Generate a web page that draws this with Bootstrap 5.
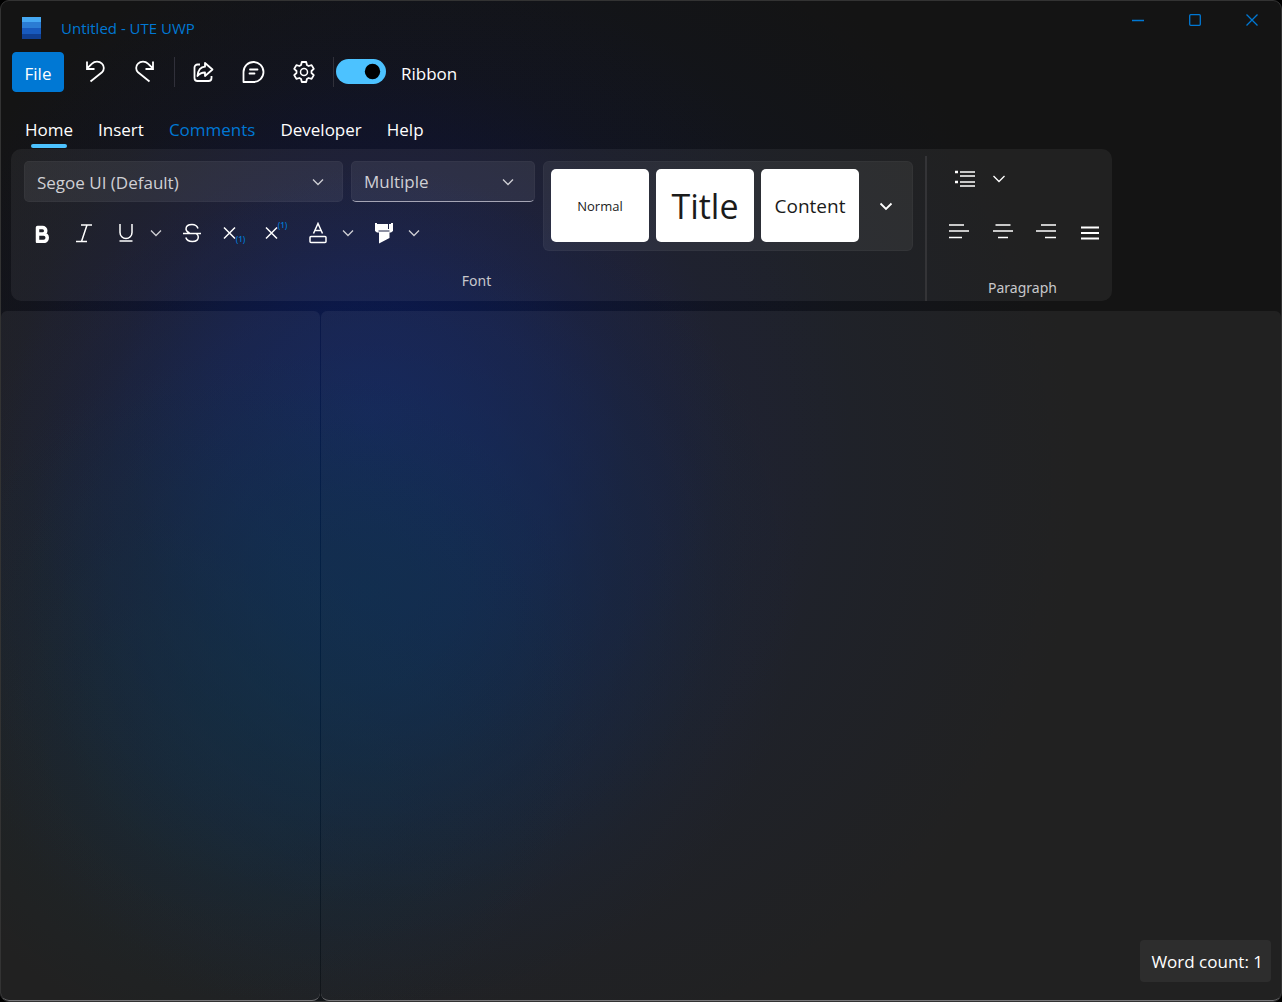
<!DOCTYPE html>
<html lang="en" data-bs-theme="dark">
<head>
<meta charset="utf-8">
<meta name="viewport" content="width=device-width, initial-scale=1">
<title>Untitled - UTE UWP</title>
<link href="https://cdn.jsdelivr.net/npm/bootstrap@5.3.0/dist/css/bootstrap.min.css" rel="stylesheet">
<style>
:root{--accent:#0078d4;--glow:#4cc2ff;--panel:rgba(255,255,255,.06)}
body{background:#000;font-family:"Open Sans","Noto Sans",sans-serif;font-size:17px;line-height:24px;color:#fff}
.app-window{min-height:100vh;border:1px solid #333;border-radius:9px;overflow:hidden;
 background:
 radial-gradient(circle at 250px 700px,rgba(4,36,54,.5) 0,rgba(4,36,54,.38) 100px,rgba(4,36,50,.18) 220px,transparent 350px),
 radial-gradient(circle at 370px 590px,rgba(2,34,76,.85) 0,rgba(2,34,76,.72) 90px,rgba(2,32,70,.36) 240px,rgba(2,30,60,.12) 350px,transparent 430px),
 radial-gradient(circle at 370px 420px,rgba(14,24,92,.95) 0,rgba(14,22,86,.75) 120px,rgba(14,18,72,.34) 260px,rgba(16,18,60,.13) 360px,transparent 480px),
 radial-gradient(circle at 480px 480px,rgba(10,24,62,.5) 0,rgba(10,24,62,.24) 320px,transparent 600px),
 #141414}
.plain-btn{background:none;border:0;padding:0;color:#fff;display:inline-flex;align-items:center;justify-content:center}
.plain-btn:hover{background:rgba(255,255,255,.08);border-radius:4px}
svg{fill:none;stroke:currentColor;stroke-width:1.5;display:block}
.title-bar{height:51px;padding-right:1px}
.app-name{font-size:15px;color:var(--accent);padding:2px 0 0 20px}
.app-logo{margin:3px 0 0 21px}
.solid-icon{stroke:none}
.win-btn{width:57px;height:38px;color:var(--accent)}
.win-btn svg{stroke-width:1.3}
.tool-row{height:40px;padding-left:11px}
.file-btn{--bs-btn-bg:var(--accent);--bs-btn-border-color:var(--accent);width:52px;height:40px;padding:3px 0 0;font-size:17px;border-radius:4px}
.tool-btn{width:50px;height:38px}
.undo-group{padding-left:6px}
.split-line{width:1px;height:30px;background:#30303a}
.ribbon-switch{padding:1px 0 0;min-height:0}
.ribbon-switch .form-check-input{float:none;width:50px;height:25px;margin:0 15px 0 2px;background-color:var(--glow);border:0;
 background-image:url("data:image/svg+xml,%3Csvg xmlns='http://www.w3.org/2000/svg' viewBox='0 0 25 25'%3E%3Ccircle cx='11.5' cy='12.5' r='7.7' fill='%23000'/%3E%3C/svg%3E")!important}
.tab-row{gap:25px;padding:26px 0 0 24px;height:57px}
.tab-row .nav-link{padding:0;color:#fff;height:30px;position:relative}
.tab-row .tab-accent{color:var(--accent)}
.tab-row .active::after{content:"";position:absolute;left:6px;right:6px;bottom:0;height:4px;border-radius:2px;background:var(--glow)}
.ribbon{margin-left:10px;height:152px;border-radius:10px;background:var(--panel);width:fit-content;max-width:100%}
.font-group{padding:12px 12px 0 13px;width:914px}
.font-left{width:511px}
.picker{height:41px;padding:2px 12px 0;font-size:17px;color:#cfcfd4;background-color:rgba(255,255,255,.07);border:1px solid rgba(255,255,255,.03);border-radius:5px;
 background-image:url("data:image/svg+xml,%3Csvg xmlns='http://www.w3.org/2000/svg' viewBox='0 0 12 12'%3E%3Cpath d='M1 3.5l5 5 5-5' fill='none' stroke='%23cfcfd4' stroke-width='1.3'/%3E%3C/svg%3E");background-size:12px;background-position:right 18px center}
.picker-font{width:319px}
.picker-size{width:184px;padding-top:0;border-bottom-color:#a5a5b5;background-position:right 20px center}
.format-row{margin:11px 0 0 -3px;height:40px}
.fmt-btn{width:42px;height:40px}
.drop-btn{width:18px;height:40px;color:#cfcfd4}
.drop-btn + .fmt-btn{margin-left:6px}
.drop-btn svg,.list-drop svg{stroke-width:1.3}
.script-mark{font-size:8px;line-height:10px;font-weight:600;color:var(--accent)}
.sub-mark{padding-top:12px}
.sup-mark{padding-bottom:16px}
.gallery{width:370px;height:90px;padding:7px 0 7px 7px;border-radius:6px;background:rgba(255,255,255,.06);border:1px solid rgba(255,255,255,.03)}
.gallery-tiles{gap:7px}
.style-tile{width:98px;height:73px;background:#fff;color:#1b1b1b;border:0;border-radius:5px;padding:0}
.tile-normal{font-size:13px}.tile-title{font-size:34px}.tile-content{font-size:19px}
.group-name{font-family:"Noto Sans",sans-serif;font-size:14px;line-height:20px;color:#c8c8cc}
.font-name{padding-left:16px;margin-top:18px}
.group-line{width:2px;background:#343437;margin-top:7px}
.para-group{width:185px;padding-top:10px}
.list-row{height:39px;padding-left:17px}
.list-btn{width:42px;height:39px}.list-drop{width:25px;height:39px}
.align-row{padding-left:10px;margin-top:14px}
.align-btn{width:45px;height:38px}
.para-name{margin-top:28px;padding-left:6px}
.page-panes{gap:1px;margin-top:10px}
.pane{background:var(--panel);border-radius:6px 6px 8px 8px;border-bottom:1px solid #77777a}
.side-pane{width:calc(25% - 1px)}
.word-count{background:#2d2d2d;border-radius:4px;padding:10px 8px 8px 11px;margin:0 10px 18px 0}
</style>
<script src="https://cdn.jsdelivr.net/npm/bootstrap@5.3.0/dist/js/bootstrap.bundle.min.js"></script>
</head>
<body>
<div class="app-window d-flex flex-column">
 <header>
  <div class="title-bar d-flex align-items-start">
   <div class="d-flex align-items-center flex-grow-1 h-100">
    <svg class="app-logo solid-icon" width="19" height="22" aria-hidden="true"><path fill="#45a8f2" d="M0 0h19v6H0z"/><path fill="#2b7cd3" d="M0 5h19v6H0z"/><path fill="#185abd" d="M0 11h19v6H0z"/><path fill="#103f91" d="M0 17h19v5H0z"/></svg>
    <span class="app-name">Untitled - UTE UWP</span>
   </div>
   <button class="plain-btn win-btn" aria-label="Minimize"><svg width="12" height="12"><path d="M0 6.5h12"/></svg></button>
   <button class="plain-btn win-btn" aria-label="Maximize"><svg width="12" height="12"><rect x=".7" y=".7" width="10.6" height="10.6" rx="1"/></svg></button>
   <button class="plain-btn win-btn" aria-label="Close"><svg width="12" height="12"><path d="M.5.5l11 11M11.500.5l-11 11"/></svg></button>
  </div>
  <div class="tool-row d-flex align-items-center">
   <button class="btn btn-primary file-btn">File</button>
   <div class="undo-group d-flex align-items-center">
    <button class="plain-btn tool-btn" aria-label="Undo"><svg width="22" height="24"><path style="stroke-width:1.8px" d="M3 1.500v7.500h7.500M3 8.500L8 3.700a7 7 0 0 1 10 0a6 6 0 0 1 0 8.600L6.500 21.500"/></svg></button>
    <button class="plain-btn tool-btn" aria-label="Redo"><svg width="22" height="24"><path style="stroke-width:1.8px" d="M19 1.500v7.500h-7.500M19 8.500L14 3.700a7 7 0 0 0-10 0a6 6 0 0 0 0 8.600L15.500 21.500"/></svg></button>
   </div>
   <div class="split-line ms-1"></div>
   <button class="plain-btn tool-btn ms-1" aria-label="Share"><svg width="22" height="22"><path style="stroke-width:1.8px" d="M7 3.500H4.500a3 3 0 0 0-3 3V17a3 3 0 0 0 3 3h11a3 3 0 0 0 3-3v-2"/><path style="stroke-width:1.8px" stroke-linejoin="round" d="M12 2l7.500 6.500L12 15v-3.500c-3 0-5.500 1-7.500 3.500c.5-5.500 3.500-9 7.500-9.300z"/></svg></button>
   <button class="plain-btn tool-btn" aria-label="Comment"><svg width="24" height="24" stroke-linecap="round"><path style="stroke-width:1.8px" stroke-linejoin="round" d="M1.500 22V12A10 10 0 1 1 11.500 22z"/><path style="stroke-width:1.8px" d="M8 9.500h7.500M7.500 13.500h5"/></svg></button>
   <button class="plain-btn tool-btn" aria-label="Settings"><svg width="24" height="24" viewBox="0 0 24 24"><circle cx="12" cy="12" r="3.500"/><path style="stroke-width:1.8px" stroke-linejoin="round" d="M9.800 2h4.400l.7 3 1.700 1 3-.9 2.200 3.800-2.300 2.100v2l2.300 2.100-2.200 3.800-3-.9-1.700 1-.7 3H9.800l-.7-3-1.700-1-3 .9-2.200-3.800L4.500 13v-2L2.200 8.900l2.200-3.800 3 .9 1.700-1z"/></svg></button>
   <div class="split-line ms-1"></div>
   <div class="form-check form-switch ribbon-switch d-flex align-items-center">
    <input class="form-check-input" type="checkbox" role="switch" id="ribbonToggle" checked>
    <label for="ribbonToggle" class="pt-1">Ribbon</label>
   </div>
  </div>
  <nav class="nav tab-row" aria-label="Ribbon tabs">
   <a class="nav-link active" aria-current="page" href="#">Home</a>
   <a class="nav-link" href="#">Insert</a>
   <a class="nav-link tab-accent" href="#">Comments</a>
   <a class="nav-link" href="#">Developer</a>
   <a class="nav-link" href="#">Help</a>
  </nav>
 </header>
 <section class="ribbon d-flex" aria-label="Home">
  <div class="font-group">
   <div class="d-flex gap-2">
    <div class="font-left">
     <div class="d-flex gap-2">
      <select class="form-select picker picker-font" aria-label="Font family"><option>Segoe UI (Default)</option></select>
      <select class="form-select picker picker-size" aria-label="Font size"><option>Multiple</option></select>
     </div>
     <div class="format-row d-flex">
      <button class="plain-btn fmt-btn" aria-label="Bold"><svg width="16" height="20" stroke-linejoin="round"><path style="stroke-width:3.5px" d="M3.500 4.500h5a3 3 0 0 1 0 6.500h-5zM3.500 11h6a3.500 3.500 0 0 1 0 7.500h-6z"/></svg></button>
      <button class="plain-btn fmt-btn" aria-label="Italic"><svg width="18" height="20"><path d="M6 2h11M1 18.500h11M12 2L6.500 18.500"/></svg></button>
      <button class="plain-btn fmt-btn" aria-label="Underline"><svg width="16" height="20"><path d="M2 1v8.500a6 6 0 0 0 12 0V1M1.500 18h13"/></svg></button>
      <button class="plain-btn drop-btn" aria-label="Underline styles"><svg width="12" height="8"><path d="M1 1.500l5 5 5-5"/></svg></button>
      <button class="plain-btn fmt-btn" aria-label="Strikethrough"><svg width="20" height="20"><path d="M16 5.500C15 2.500 12.500 1.500 10 1.500c-3.500 0-6 1.500-6 4.500c0 2 1.500 3 3.500 4M1 10.500h18M14.500 11c1.200.8 1.800 1.800 1.800 3c0 3-2.800 4.500-6 4.500c-3 0-5.500-1-6.500-4"/></svg></button>
      <button class="plain-btn fmt-btn" aria-label="Subscript"><svg width="13" height="14"><path d="M1 1.500l11 11M12 1.500l-11 11"/></svg><span class="script-mark sub-mark">(1)</span></button>
      <button class="plain-btn fmt-btn" aria-label="Superscript"><svg width="13" height="14"><path d="M1 1.500l11 11M12 1.500l-11 11"/></svg><span class="script-mark sup-mark">(1)</span></button>
      <button class="plain-btn fmt-btn" aria-label="Font color"><svg width="20" height="22"><path d="M5.500 11.500L10 1.500l4.500 10M7 8.500h6"/><rect x="2" y="14.500" width="16" height="6" rx="1"/></svg></button>
      <button class="plain-btn drop-btn" aria-label="Font colors"><svg width="12" height="8"><path d="M1 1.500l5 5 5-5"/></svg></button>
      <button class="plain-btn fmt-btn" aria-label="Highlight"><svg class="solid-icon" width="20" height="22"><path fill="#fff" fill-rule="evenodd" d="M1 1h2v1h11v5h1V2h2V1h2v8l-2 1.500h-1.500V16L5 21.500V10.500H3L1 9zM4.500 8.500v1h11v-1z"/></svg></button>
      <button class="plain-btn drop-btn" aria-label="Highlight colors"><svg width="12" height="8"><path d="M1 1.500l5 5 5-5"/></svg></button>
     </div>
    </div>
    <div class="gallery d-flex align-items-start">
     <div class="gallery-tiles d-flex">
      <button class="style-tile tile-normal">Normal</button>
      <button class="style-tile tile-title">Title</button>
      <button class="style-tile tile-content">Content</button>
     </div>
     <button class="plain-btn flex-grow-1 h-100" aria-label="More styles"><svg width="14" height="9"><path style="stroke-width:1.8px" d="M1.500 1.500L7 7l5.500-5.500"/></svg></button>
    </div>
   </div>
   <div class="group-name font-name text-center">Font</div>
  </div>
  <div class="group-line"></div>
  <div class="para-group">
   <div class="list-row d-flex">
    <button class="plain-btn list-btn" aria-label="Bullets"><svg width="22" height="20"><path d="M6 3h15M6 7h15M6 13h15M6 17h15"/><path d="M1 3h3M1 13h3" style="stroke-width:2.5px"/></svg></button>
    <button class="plain-btn list-drop" aria-label="List styles"><svg width="12" height="8"><path d="M.5 1l5.500 5.500L11.500 1"/></svg></button>
   </div>
   <div class="align-row d-flex">
    <button class="plain-btn align-btn" aria-label="Align left"><svg width="20" height="16"><path d="M0 2h15M0 8h20M0 14.500h13"/></svg></button>
    <button class="plain-btn align-btn" aria-label="Center"><svg width="20" height="16"><path d="M2.500 2h15M0 8h20M5 14.500h10"/></svg></button>
    <button class="plain-btn align-btn" aria-label="Align right"><svg width="20" height="16"><path d="M5 2h15M0 8h20M9 14.500h11"/></svg></button>
    <button class="plain-btn align-btn pt-1" aria-label="Justify"><svg width="18" height="16"><path d="M0 2.500h18M0 8h18M0 13.500h18" style="stroke-width:1.8px"/></svg></button>
   </div>
   <div class="group-name para-name text-center">Paragraph</div>
  </div>
 </section>
 <main class="page-panes d-flex flex-grow-1">
  <aside class="pane side-pane" aria-label="Side pane"></aside>
  <section class="pane flex-grow-1 d-flex justify-content-end align-items-end" aria-label="Document">
   <div class="word-count">Word count: 1</div>
  </section>
 </main>
</div>
</body>
</html>
